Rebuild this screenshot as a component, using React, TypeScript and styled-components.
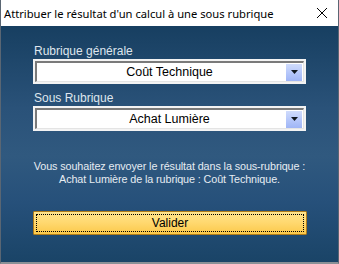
import React from 'react';
import styled, { createGlobalStyle } from 'styled-components';

const GlobalStyle = createGlobalStyle`
  html, body {
    margin: 0;
    padding: 0;
    background: #ffffff;
  }
`;

const Window = styled.div`
  width: 339px;
  height: 264px;
  display: flex;
  flex-direction: column;
  box-sizing: border-box;
  border-left: 1px solid #5a6673;
  border-right: 1px solid #5a6673;
  border-bottom: 2px solid #8a9096;
  background: #ffffff;
  overflow: hidden;
`;

const TitleBar = styled.div`
  height: 26px;
  flex: none;
  display: flex;
  align-items: center;
  justify-content: space-between;
  padding: 0 10px 0 3px;
  background: #ffffff;
  font-family: 'Noto Sans', 'Liberation Sans', sans-serif;
  font-size: 11.2px;
  color: #000000;
`;

const CloseIcon = styled.svg`
  width: 12px;
  height: 12px;
`;

const Body = styled.div`
  flex: 1;
  display: flex;
  flex-direction: column;
  padding: 18px 32px 0 32px;
  background: linear-gradient(180deg, #173f61 0%, #2a5279 35%, #30597f 55%, #26507a 75%, #1a4467 100%);
  font-family: 'Liberation Sans', Arial, sans-serif;
`;

const FieldLabel = styled.div`
  font-size: 12px;
  line-height: 15px;
  color: #dfe6ee;
  padding-left: 1px;
`;

const Combo = styled.div<{ $gap?: number }>`
  height: 25px;
  box-sizing: border-box;
  border: 2px solid #f3f3f3;
  background: #f3f3f3;
  margin-bottom: ${(p) => p.$gap ?? 0}px;
`;

const ComboInner = styled.div`
  height: 100%;
  box-sizing: border-box;
  display: flex;
  align-items: center;
  border-top: 2px solid #7a7a7a;
  border-left: 2px solid #7a7a7a;
  border-bottom: 1px solid #e4e4e4;
  border-right: 1px solid #e4e4e4;
  background: #ffffff;
  padding-right: 1px;
`;

const ComboText = styled.div`
  flex: 1;
  text-align: center;
  font-size: 12.5px;
  color: #000000;
  padding-left: 16px;
`;

const DropButton = styled.div`
  width: 16px;
  height: 17px;
  display: flex;
  align-items: center;
  justify-content: center;
  background: linear-gradient(180deg, #d0dcfc 0%, #b4c6fa 55%, #9fb5f6 100%);
`;

const Arrow = styled.svg`
  width: 7px;
  height: 4px;
`;

const Message = styled.div`
  margin-top: 29px;
  text-align: center;
  white-space: nowrap;
  font-size: 10.8px;
  letter-spacing: -0.1px;
  line-height: 13px;
  color: #e6ecf2;
`;

const ValidateButton = styled.button`
  margin-top: 25px;
  height: 24px;
  width: 274px;
  padding: 2px;
  box-sizing: border-box;
  border: 1px solid #b07d1c;
  border-radius: 1px;
  background: linear-gradient(180deg, #ffe48c 0%, #ffd86e 50%, #fbc84a 100%);
  font-family: 'Liberation Sans', Arial, sans-serif;
  font-size: 12px;
  color: #000000;
  cursor: pointer;
`;

const FocusRing = styled.div`
  height: 100%;
  box-sizing: border-box;
  border: 1px dotted #000000;
  display: flex;
  align-items: center;
  justify-content: center;
`;

const ComboBox = ({ value, gap }: { value: string; gap?: number }) => (
  <Combo $gap={gap}>
    <ComboInner>
      <ComboText>{value}</ComboText>
      <DropButton>
        <Arrow viewBox="0 0 7 4">
          <polygon points="0,0 7,0 3.5,4" fill="#101820" />
        </Arrow>
      </DropButton>
    </ComboInner>
  </Combo>
);

export default function App() {
  return (
    <>
      <GlobalStyle />
      <Window>
        <TitleBar>
          <span>Attribuer le résultat d'un calcul à une sous rubrique</span>
          <CloseIcon viewBox="0 0 12 12">
            <path d="M1 1 L11 11 M11 1 L1 11" stroke="#000" strokeWidth="1" />
          </CloseIcon>
        </TitleBar>
        <Body>
          <FieldLabel>Rubrique générale</FieldLabel>
          <ComboBox value="Coût Technique" gap={7} />
          <FieldLabel>Sous Rubrique</FieldLabel>
          <ComboBox value="Achat Lumière" />
          <Message>
            Vous souhaitez envoyer le résultat dans la sous-rubrique :
            <br />
            Achat Lumière de la rubrique : Coût Technique.
          </Message>
          <ValidateButton>
            <FocusRing>Valider</FocusRing>
          </ValidateButton>
        </Body>
      </Window>
    </>
  );
}
